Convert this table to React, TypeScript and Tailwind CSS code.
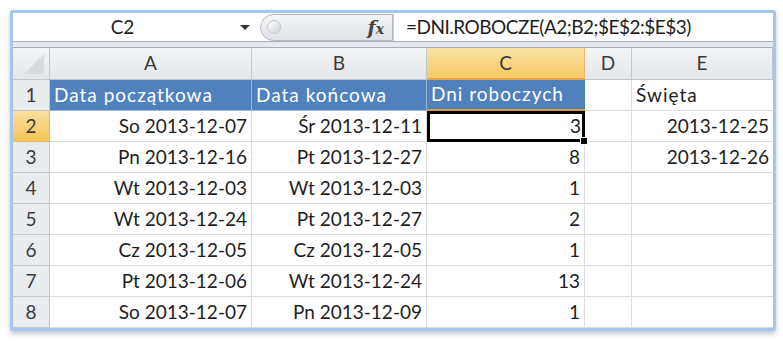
import React from "react";

const font = { fontFamily: "Lato, 'Open Sans', sans-serif" };

const COLS = ["A", "B", "C", "D", "E"];

const rows: string[][] = [
  ["So 2013-12-07", "Śr 2013-12-11", "3", "", "2013-12-25"],
  ["Pn 2013-12-16", "Pt 2013-12-27", "8", "", "2013-12-26"],
  ["Wt 2013-12-03", "Wt 2013-12-03", "1", "", ""],
  ["Wt 2013-12-24", "Pt 2013-12-27", "2", "", ""],
  ["Cz 2013-12-05", "Cz 2013-12-05", "1", "", ""],
  ["Pt 2013-12-06", "Wt 2013-12-24", "13", "", ""],
  ["So 2013-12-07", "Pn 2013-12-09", "1", "", ""],
];

const FormulaBar = () => (
  <div className="flex h-[29px] items-center border-b border-[#a9aeb6] bg-white">
    <div className="flex w-[219px] items-center justify-center text-[19px] text-[#1e1e1e]">C2</div>
    <svg width="14" height="10" viewBox="0 0 14 10" className="ml-[6px]">
      <path d="M2 3 L12 3 L7 8 Z" fill="#333" />
    </svg>
    <div className="ml-[8px] flex h-[27px] w-[133px] items-center rounded-l-full border border-[#b4b9c0] bg-gradient-to-b from-[#f4f5f7] to-[#dfe2e6] pl-[6px] pr-[8px]">
      <div className="h-[14px] w-[14px] rounded-full border border-[#c3c7cc] bg-gradient-to-br from-white to-[#cfd3d8]" />
      <span className="ml-auto text-[19px] font-bold italic text-[#444]" style={{ fontFamily: "'DejaVu Serif', serif" }}>
        f<span className="text-[14px]">x</span>
      </span>
    </div>
    <div className="h-full w-px bg-[#c9cdd2]" />
    <div className="pl-[12px] text-[19px] tracking-[-0.5px] text-[#1e1e1e]">=DNI.ROBOCZE(A2;B2;$E$2:$E$3)</div>
  </div>
);

export default function App() {
  return (
    <div className="h-[341px] w-[783px] bg-white pl-[10px] pt-[10px]" style={font}>
      <div className="w-[766px] rounded-[3px] border-[3px] border-[#a6c6ee] shadow-[0_3px_5px_rgba(120,130,150,0.45)]">
        <FormulaBar />
        <div className="h-[6px] border-b border-[#a9aeb6] bg-[#e6e9ed]" />
        <div className="grid grid-cols-[37px_202px_175px_158px_47px_141px] text-[19px] text-[#1e1e1e]">
          {/* column headers */}
          <div className="flex h-[32px] items-end justify-end border-b border-r border-[#c3c8cf] bg-gradient-to-b from-[#f4f5f7] to-[#e3e6ea] p-[4px]">
            <svg width="22" height="22" viewBox="0 0 22 22">
              <path d="M21 1 L21 21 L1 21 Z" fill="#d7dade" />
            </svg>
          </div>
          {COLS.map((c) => (
            <div
              key={c}
              className={
                c === "C"
                  ? "flex h-[32px] items-center justify-center border-b-2 border-r border-b-[#e2a449] border-r-[#e0b873] bg-gradient-to-b from-[#fbe3a5] to-[#f5c95f] text-[#3b3b3b]"
                  : "flex h-[32px] items-center justify-center border-b border-r border-[#c3c8cf] bg-gradient-to-b from-[#f4f5f7] to-[#e3e6ea] text-[#3b3b3b]"
              }
            >
              {c}
            </div>
          ))}

          {/* row 1 */}
          <div className="flex h-[31px] items-center justify-center border-b border-r border-[#c3c8cf] bg-[#e9ecef] text-[#3b3b3b]">1</div>
          <div className="flex h-[31px] items-center border-b border-r border-[#9db5d6] bg-[#4f81bd] px-[4px] tracking-[1px] text-white">Data początkowa</div>
          <div className="flex h-[31px] items-center border-b border-r border-[#9db5d6] bg-[#4f81bd] px-[4px] tracking-[1px] text-white">Data końcowa</div>
          <div className="flex h-[31px] items-center border-b-2 border-[#d89a3c] bg-[#4f81bd] px-[4px] tracking-[1px] text-white">Dni roboczych</div>
          <div className="h-[31px] border-b border-r border-[#dadcdd] bg-white" />
          <div className="flex h-[31px] items-center border-b border-[#dadcdd] bg-white px-[4px] tracking-[1px]">Święta</div>

          {rows.map((r, i) => (
            <React.Fragment key={i}>
              <div
                className={
                  i === 0
                    ? "flex h-[31px] items-center justify-center border-b border-r border-[#e0b873] bg-gradient-to-b from-[#fbe0a0] to-[#f4c453] text-[#3b3b3b]"
                    : "flex h-[31px] items-center justify-center border-b border-r border-[#c3c8cf] bg-[#e9ecef] text-[#3b3b3b]"
                }
              >
                {i + 2}
              </div>
              <div className="flex h-[31px] items-center justify-end border-b border-r border-[#dadcdd] bg-white px-[4px]">{r[0]}</div>
              <div className="flex h-[31px] items-center justify-end border-b border-r border-[#dadcdd] bg-white px-[4px]">{r[1]}</div>
              {i === 0 ? (
                <div className="relative flex h-[31px] items-center justify-end border-[3px] border-black bg-white px-[1px]">
                  {r[2]}
                  <div className="absolute -bottom-[6px] -right-[6px] h-[8px] w-[8px] border border-white bg-black" />
                </div>
              ) : (
                <div className="flex h-[31px] items-center justify-end border-b border-r border-[#dadcdd] bg-white px-[4px]">{r[2]}</div>
              )}
              <div className="h-[31px] border-b border-r border-[#dadcdd] bg-white" />
              <div className="flex h-[31px] items-center justify-end border-b border-[#dadcdd] bg-white px-[4px]">{r[4]}</div>
            </React.Fragment>
          ))}
        </div>
      </div>
    </div>
  );
}
